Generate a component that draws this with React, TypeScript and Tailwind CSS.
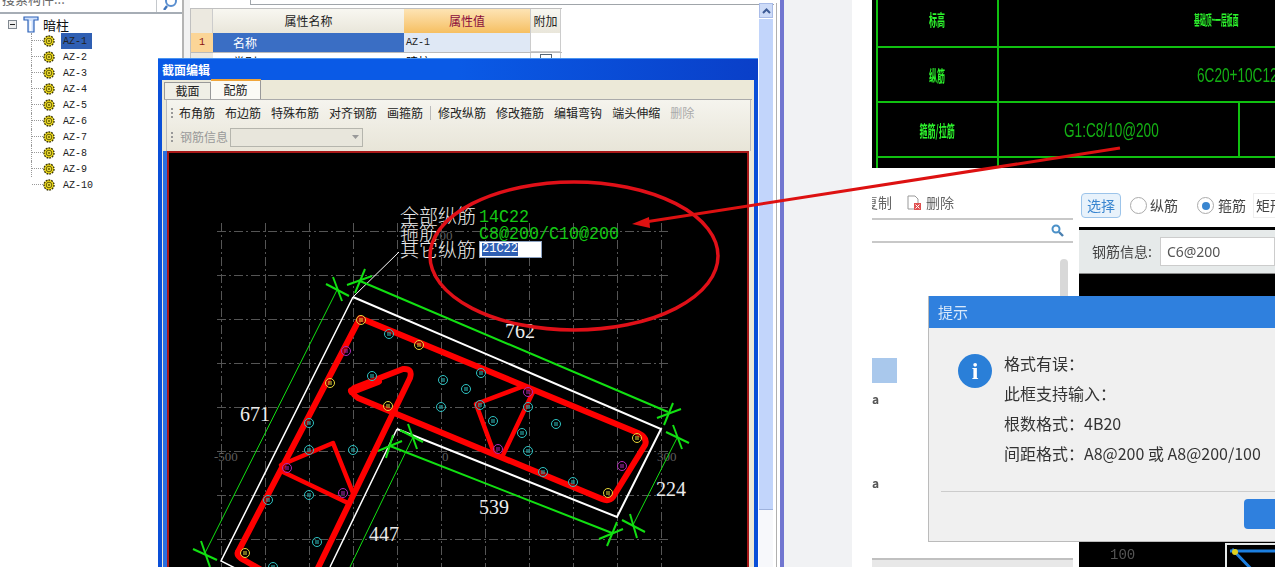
import React from "react";

const Gear = () => (
  <svg width="12" height="12" viewBox="0 0 12 12" className="shrink-0">
    <circle cx="6" cy="6" r="5" fill="#f0dc1a" stroke="#3a3400" strokeWidth="1.4" strokeDasharray="1.8 1" />
    <circle cx="6" cy="6" r="2.8" fill="#fff04a" stroke="#3a3500" strokeWidth="0.8" />
    <rect x="4.8" y="4.8" width="2.4" height="2.4" fill="#8a7d00" />
  </svg>
);

const items = ["AZ-1", "AZ-2", "AZ-3", "AZ-4", "AZ-5", "AZ-6", "AZ-7", "AZ-8", "AZ-9", "AZ-10"];

const Tree = () => (
  <div className="w-[182px] shrink-0 flex flex-col">
    <div className="flex h-[14px] border-b-2 border-[#a6adb5]">
      <div className="w-[157px] border-r border-[#c4c8cc] flex items-end overflow-hidden text-[13px] leading-[15px] text-[#666] pl-[2px] pb-[6px]">
        搜索构件...
      </div>
      <div className="flex-1 flex justify-center items-start overflow-hidden">
        <svg width="16" height="10" viewBox="0 0 16 10">
          <circle cx="9" cy="1" r="5" fill="none" stroke="#5a8fd0" strokeWidth="2" />
          <path d="M5 6 L2 10" stroke="#3f74bb" strokeWidth="2.4" />
        </svg>
      </div>
    </div>
    <div className="flex items-center h-[17px] mt-[2px] pl-[8px]">
      <div className="w-[9px] h-[9px] border border-[#808890] bg-[#eee] flex items-center justify-center">
        <div className="w-[5px] h-px bg-[#222]" />
      </div>
      <svg width="16" height="17" viewBox="0 0 16 17" className="ml-[6px]">
        <path d="M1 1 H15 V4 H11 V16 H5 V4 H1 Z" fill="#cfe0fb" stroke="#2e63b8" strokeWidth="1.2" />
        <rect x="6.5" y="5" width="2" height="10" fill="#fff" />
      </svg>
      <span className="ml-[4px] text-[13px] text-[#111] leading-none">暗柱</span>
    </div>
    <div className="flex flex-col pl-[31px]">
      {items.map((t, i) => (
        <div key={t} className="flex items-center h-[16px]">
          <div className={`w-[12px] h-full border-l border-dotted border-[#999] ${i === items.length - 1 ? "border-transparent" : ""}`}>
            <div className="h-[8px] border-b border-dotted border-[#999]" />
          </div>
          <Gear />
          <span className={`ml-[6px] px-[2px] h-full flex items-center font-['Liberation_Mono',monospace] text-[10px] text-[#222] ${i === 0 ? "bg-[#2f5fb3] min-w-[31px]" : ""}`}>
            {t}
          </span>
        </div>
      ))}
    </div>
  </div>
);

const Props = () => (
  <div className="flex-1 flex flex-col relative min-w-0">
    <div className="h-[5px] ml-[60px] mr-[6px] border-b border-l border-[#a0a5aa]" />
    <div className="mt-[3px] border-t border-l border-[#c0c0c0] flex flex-col w-[372px] text-[12px]">
      <div className="flex h-[24px]">
        <div className="w-[22px] bg-[#ece9e0] border-r border-[#ccc]" />
        <div className="w-[191px] bg-gradient-to-b from-[#f8f7f1] to-[#e9e6da] flex items-center justify-center text-[#222]">属性名称</div>
        <div className="w-[126px] bg-gradient-to-b from-[#fde4b4] to-[#f6bf60] flex items-center justify-center text-[#8a0b3c]">属性值</div>
        <div className="w-[31px] bg-gradient-to-b from-[#f8f7f1] to-[#e9e6da] border-x border-[#ccc] flex items-center justify-center text-[#222]">附加</div>
      </div>
      <div className="flex h-[19px]">
        <div className="w-[22px] bg-[#fbd597] flex items-center justify-center text-[#8a1010] font-['Liberation_Mono',monospace] text-[10px]">1</div>
        <div className="w-[191px] bg-[#3a6ec4] text-white flex items-center pl-[20px]">名称</div>
        <div className="w-[126px] bg-[#dfe8f5] flex items-center pl-[2px] font-['Liberation_Mono',monospace] text-[10px] text-[#222]">AZ-1</div>
        <div className="w-[31px] border-x border-b border-[#ccc]" />
      </div>
      <div className="flex h-[19px] border-t border-[#bbb]">
        <div className="w-[22px] bg-[#ece9e0]" />
        <div className="w-[191px] pl-[20px]">类别</div>
        <div className="w-[126px] pl-[2px]">暗柱</div>
        <div className="w-[31px] border-x border-[#ccc] flex justify-center pt-[1px]">
          <div className="w-[12px] h-[12px] border border-[#567]" />
        </div>
      </div>
    </div>
    <div className="absolute right-[3px] top-[3px] bottom-0 w-[18px] flex flex-col border-r border-[#b0b0b0] pr-[3px]">
      <div className="h-[15px] bg-[#cddbf8] border border-[#a9bce8] flex items-center justify-center">
        <svg width="9" height="6" viewBox="0 0 9 6"><path d="M1 5 L4.5 1.5 L8 5" fill="none" stroke="#3d5b96" strokeWidth="2" /></svg>
      </div>
      <div className="h-[491px] bg-[#c2d5fb] border-b border-[#9eb2dc] mt-[1px]" />
      <div className="flex-1 bg-[#f7f8fb]" />
    </div>
  </div>
);

const tools = ["布角筋", "布边筋", "特殊布筋", "对齐钢筋", "画箍筋"];
const tools2 = ["修改纵筋", "修改箍筋", "编辑弯钩", "端头伸缩"];

const Grip = () => (
  <div className="w-[2px] h-[11px] bg-[repeating-linear-gradient(to_bottom,#999_0,#999_2px,transparent_2px,transparent_4px)]" />
);

const dots: [number, number, string][] = [
  [361, 320, "#e8d83a"], [419, 345, "#e8d83a"], [330, 383, "#e8d83a"], [388, 406, "#e8d83a"], [245, 553, "#e8d83a"], [637, 438, "#e8d83a"], [608, 493, "#e8d83a"],
  [346, 351, "#b02ab8"], [287, 468, "#b02ab8"], [343, 493, "#b02ab8"], [528, 392, "#b02ab8"], [498, 449, "#b02ab8"], [622, 466, "#b02ab8"],
  [389, 334, "#2fc4c4"], [372, 376, "#2fc4c4"], [443, 380, "#2fc4c4"], [309, 423, "#2fc4c4"], [309, 450, "#2fc4c4"], [353, 450, "#2fc4c4"], [441, 407, "#2fc4c4"],
  [268, 500, "#2fc4c4"], [309, 495, "#2fc4c4"], [317, 542, "#2fc4c4"], [273, 567, "#2fc4c4"], [481, 373, "#2fc4c4"], [466, 389, "#2fc4c4"], [480, 405, "#2fc4c4"],
  [528, 407, "#2fc4c4"], [493, 421, "#2fc4c4"], [522, 433, "#2fc4c4"], [556, 424, "#2fc4c4"], [528, 451, "#2fc4c4"], [543, 472, "#2fc4c4"], [573, 482, "#2fc4c4"],
];

const ticks = [
  [326, 284, 349, 296], [333, 277, 342, 301], [347, 285, 372, 276], [365, 269, 355, 293],
  [657, 418, 681, 409], [673, 403, 664, 425], [666, 432, 689, 443], [673, 425, 682, 449],
  [599, 539, 623, 529], [617, 522, 607, 546], [622, 520, 645, 532], [630, 514, 637, 538],
  [378, 451, 402, 441], [393, 435, 386, 458], [400, 430, 423, 442], [408, 424, 417, 449],
  [193, 549, 217, 560], [201, 541, 210, 567],
];

const gridX = [221, 265, 309, 353, 397, 441, 485, 529, 573, 617, 661];
const gridY = [231, 275, 319, 363, 407, 451, 495, 539];

const Drawing = () => (
  <svg width="578" height="414" viewBox="169 153 578 414" className="block">
    <g stroke="#555555" strokeWidth="1" strokeDasharray="9 3 2 3">
      {gridX.map((x) => <line key={x} x1={x + 0.5} y1="223" x2={x + 0.5} y2="567" />)}
      {gridY.map((y) => <line key={y} x1="217" y1={y + 0.5} x2="669" y2={y + 0.5} />)}
    </g>
    <g fontFamily="'Liberation Serif',serif" fontSize="13" fill="#5e5e5e">
      <text x="214" y="461">-500</text>
      <text x="442" y="461">0</text>
      <text x="657" y="461">300</text>
      <text x="433" y="240">200</text>
    </g>
    <g stroke="#fff" fill="none">
      <path d="M353 297 L661 429 L617 517 L397 429" strokeWidth="2" />
      <path d="M397 429 L330 567 M353 297 L221 561 L245 573" strokeWidth="1.5" />
      <path d="M399 252 L353 297" strokeWidth="1" />
    </g>
    <g stroke="#12e012" fill="none">
      <path d="M360 281 L668 412 M390 446 L612 533" strokeWidth="2" />
      <path d="M337 290 L205 553 M413 437 L350 567 M677 438 L633 525" strokeWidth="1" />
      {ticks.map((t, i) => <line key={i} x1={t[0]} y1={t[1]} x2={t[2]} y2={t[3]} strokeWidth="2" />)}
    </g>
    <g stroke="#ff0000" fill="none" strokeLinejoin="round" strokeLinecap="round">
      <path d="M238 552 L360 318 L638 433 Q648 438 645 445 L613 497 Q609 502 602 499 L358 398 Q350 393 354 388 L403 369 Q413 368 410 378 L317 570" strokeWidth="6" />
      <path d="M238 552 Q236 556 244 560 L270 575" strokeWidth="6" />
      <path d="M352 391 L378 381" strokeWidth="8" />
      <path d="M281 465 L333 443 L353 493 M281 471 L348 503" strokeWidth="4.5" />
      <path d="M524 386 L476 404 L494 453 M533 392 L503 455" strokeWidth="4.5" />
    </g>
    {dots.map(([x, y, c], i) => (
      <g key={i} stroke={c} fill="none" strokeWidth="1">
        <circle cx={x} cy={y} r="4.5" fill="#000" fillOpacity="0.35" />
        <path d={`M${x - 2} ${y - 1} H${x + 2} M${x - 2} ${y + 1} H${x + 2}`} />
      </g>
    ))}
    <g fontFamily="'Noto Sans CJK SC',sans-serif" fontSize="19" fill="#ececec" fontWeight="300">
      <text x="400" y="223">全部纵筋</text>
      <text x="400" y="240">箍筋</text>
      <text x="400" y="257">其它纵筋</text>
    </g>
    <g fontFamily="'Liberation Mono',monospace" fontSize="19" fill="#14c814">
      <text x="479" y="222" textLength="50" lengthAdjust="spacingAndGlyphs">14C22</text>
      <text x="479" y="239" textLength="140" lengthAdjust="spacingAndGlyphs">C8@200/C10@200</text>
    </g>
    <g fontFamily="'Liberation Serif',serif" fontSize="20" fill="#ececec">
      <text x="505" y="338">762</text>
      <text x="240" y="421">671</text>
      <text x="369" y="541">447</text>
      <text x="479" y="514">539</text>
      <text x="656" y="496">224</text>
    </g>
  </svg>
);

const SectionWindow = () => (
  <div className="absolute left-[158px] top-[58px] w-[600px] h-[520px] flex flex-col bg-[#0a4fd8] border-t border-[#4a94f0] px-[4px]">
    <div className="h-[21px] shrink-0 -mx-[4px] px-[4px] bg-gradient-to-r from-[#0a5ae6] via-[#0a5ae6] to-[#0a3fc8] flex items-center text-white text-[12px] font-bold">
      截面编辑
    </div>
    <div className="flex-1 bg-[#ece9d8] flex flex-col pl-[3px] pr-[2px]">
      <div className="flex items-end h-[20px] -ml-[1px] shrink-0 border-b border-[#aaa]">
        <div className="w-[47px] h-[17px] bg-[#f0efe6] border border-b-0 border-[#999] flex items-center justify-center text-[12px] text-[#222]">截面</div>
        <div className="w-[50px] h-[20px] bg-[#fbfaf5] border-t-2 border-t-[#f0a53a] border-r border-[#999] flex items-center justify-center text-[12px] text-[#222]">配筋</div>
      </div>
      <div className="mx-[1px] h-[51px] shrink-0 border-x border-[#bbb] bg-gradient-to-b from-[#f5f4ee] to-[#e8e5d8] flex flex-col">
        <div className="flex items-center gap-[10px] h-[26px] pl-[4px] text-[12px] text-[#222] whitespace-nowrap">
          <div className="mr-[-4px]"><Grip /></div>
          {tools.map((t) => <span key={t}>{t}</span>)}
          <div className="w-px h-[14px] bg-[#bbb] -mx-[3px]" />
          {tools2.map((t) => <span key={t}>{t}</span>)}
          <span className="text-[#aaa]">删除</span>
        </div>
        <div className="flex items-center h-[22px] pl-[4px] text-[12px] text-[#999]">
          <Grip />
          <span className="ml-[7px]">钢筋信息</span>
          <div className="ml-[2px] w-[133px] h-[19px] border border-[#b5b5ad] bg-[#e8e6dc] flex items-center justify-end pr-[3px]">
            <svg width="7" height="4" viewBox="0 0 7 4"><path d="M0 0 H7 L3.5 4 Z" fill="#999" /></svg>
          </div>
        </div>
      </div>
      <div className="flex-1 flex min-h-0">
        <div className="w-[4px] -ml-[2px] bg-[#2a6fe0] shrink-0" />
        <div className="w-[582px] shrink-0 border-2 border-[#a81818] bg-black relative overflow-hidden">
          <Drawing />
          <div className="absolute left-[310px] top-[88px] w-[63px] h-[17px] bg-white border border-[#8aa0c0] flex items-center pl-[2px]">
            <span className="bg-[#2f5fb3] text-white font-['Liberation_Mono',monospace] text-[12px] leading-[13px]">21C22</span>
          </div>
        </div>
      </div>
    </div>
  </div>
);

const TopDrawing = () => (
  <div className="h-[168px] bg-black pl-[4px] overflow-hidden text-[#2df52d]">
    <div className="w-[600px] h-full border-l-2 border-[#10c010] flex flex-col">
      <div className="h-[48px] flex border-b-2 border-[#10c010] shrink-0">
        <div className="w-[121px] shrink-0 border-r-2 border-[#10c010] flex items-center justify-center pb-[8px] text-[16px] font-bold"><span className="inline-block scale-x-[0.5]">标高</span></div>
        <div className="flex-1 pl-[195px] pt-[9px] text-[14px] font-bold whitespace-nowrap"><span className="inline-block origin-left scale-x-[0.42]">基础顶~一层板面</span></div>
      </div>
      <div className="h-[55px] flex border-b-2 border-[#10c010] shrink-0">
        <div className="w-[121px] shrink-0 border-r-2 border-[#10c010] flex items-center justify-center text-[16px] font-bold"><span className="inline-block scale-x-[0.5]">纵筋</span></div>
        <div className="flex-1 flex items-center pl-[198px] text-[20px] whitespace-nowrap text-[#14b014] font-['Liberation_Sans',sans-serif]"><span className="inline-block origin-left scale-x-[0.68]">6C20+10C12</span></div>
      </div>
      <div className="h-[55px] flex border-b-2 border-[#10c010] shrink-0">
        <div className="w-[121px] shrink-0 border-r-2 border-[#10c010] flex items-center justify-center text-[16px] font-bold whitespace-nowrap"><span className="inline-block scale-x-[0.5]">箍筋/拉筋</span></div>
        <div className="w-[241px] shrink-0 border-r-2 border-[#10c010] flex items-center pl-[65px] text-[20px] whitespace-nowrap text-[#14b014] font-['Liberation_Sans',sans-serif]"><span className="inline-block origin-left scale-x-[0.68]">G1:C8/10@200</span></div>
      </div>
      <div className="flex-1 flex"><div className="w-[121px] border-r-2 border-[#10c010]" /></div>
    </div>
  </div>
);

const BottomPanel = () => (
  <div className="flex-1 mt-[22px] flex min-h-0 text-[#444] text-[14px]">
    <div className="w-[201px] shrink-0 flex flex-col overflow-hidden">
      <div className="h-[28px] flex items-center gap-[3px] shrink-0 -ml-[8px] pb-[3px]">
        <span className="text-[#666]">复制</span>
        <svg width="18" height="18" viewBox="0 0 18 18" className="ml-[10px]">
          <path d="M3 2 H10 L13 5 V15 H3 Z" fill="#fff" stroke="#999" />
          <rect x="9" y="9" width="7" height="7" fill="#e05050" />
          <path d="M10.5 10.5 L14.5 14.5 M14.5 10.5 L10.5 14.5" stroke="#fff" />
        </svg>
        <span className="text-[#666]">删除</span>
      </div>
      <div className="h-[25px] shrink-0 border-y-2 border-[#c8c8c8] flex items-center justify-end pr-[9px]">
        <svg width="13" height="13" viewBox="0 0 13 13"><circle cx="5" cy="5" r="3.5" fill="none" stroke="#4a90c8" strokeWidth="2" /><path d="M8 8 L12 12" stroke="#4a7fb0" strokeWidth="2.4" /></svg>
      </div>
      <div className="flex-1 relative">
        <div className="absolute right-[5px] top-[16px] w-[8px] h-[90px] rounded bg-[#d8d8d8]" />
        <div className="absolute left-0 top-[115px] w-[25px] h-[25px] bg-[#a9c8ec]" />
        <span className="absolute left-0 top-[147px] text-[12px] font-bold text-[#555]">a</span>
        <span className="absolute left-0 top-[231px] text-[12px] font-bold text-[#555]">a</span>
      </div>
      <div className="h-[9px] shrink-0 border-t-2 border-[#c0c0c0] bg-[#e8e8e8]" />
    </div>
    <div className="flex-1 flex flex-col min-w-0 pl-[8px] overflow-hidden">
      <div className="h-[37px] shrink-0 flex items-start gap-[9px] pt-[3px] whitespace-nowrap">
        <div className="w-[40px] shrink-0 h-[25px] border border-[#9cc4ea] rounded bg-[#e8f2fb] text-[#3a86d0] flex items-center justify-center">选择</div>
        <div className="flex items-center gap-[3px] h-[25px] shrink-0">
          <div className="w-[17px] h-[17px] rounded-full border border-[#aaa] bg-white shrink-0" />
          <span>纵筋</span>
        </div>
        <div className="flex items-center gap-[4px] h-[25px] ml-[10px] shrink-0">
          <div className="w-[17px] h-[17px] rounded-full border border-[#aaa] bg-white flex items-center justify-center shrink-0">
            <div className="w-[8px] h-[8px] rounded-full bg-[#3a86d0]" />
          </div>
          <span>箍筋</span>
        </div>
        <div className="h-[25px] border border-[#eee] flex items-center pl-[2px] -ml-[2px] shrink-0">矩形</div>
      </div>
      <div className="flex-1 -ml-[2px] bg-black pt-[3px] flex flex-col">
        <div className="h-[44px] shrink-0 bg-[#e6eaea] flex items-center pl-[13px] gap-[8px] border-b border-[#888]">
          <span className="whitespace-nowrap">钢筋信息:</span>
          <div className="flex-1 h-[29px] bg-white border border-[#ccc] flex items-center pl-[6px] font-['Noto_Sans',sans-serif] text-[#555]">C6@200</div>
        </div>
        <div className="flex-1 flex items-end">
          <div className="w-[145px] h-[24px] relative text-[#555] font-['Liberation_Mono',monospace] text-[14px]">
            <span className="absolute left-[31px] top-[2px]">100</span>
          </div>
          <div className="flex-1 h-[24px] ml-[1px] bg-black border-l-2 border-t-2 border-[#e6eaea] overflow-hidden">
            <svg width="60" height="24" viewBox="0 0 60 24"><path d="M3 6 H60 M5 4 L30 30" stroke="#1c7fe0" strokeWidth="3" fill="none" /><circle cx="8" cy="7" r="3" fill="#e0d020" /></svg>
          </div>
        </div>
      </div>
    </div>
  </div>
);

const Dialog = () => (
  <div className="absolute left-[928px] top-[296px] w-[400px] h-[246px] bg-[#f0f0f0] border-b border-l border-[#bbb] blur-[0.4px] flex flex-col">
    <div className="h-[32px] shrink-0 bg-[#2f80de] text-[#d8e8fa] text-[15px] flex items-center pl-[9px]">提示</div>
    <div className="flex-1 flex pl-[29px] pt-[22px] min-h-0">
      <div className="w-[34px] h-[34px] rounded-full bg-[#2a7fd8] flex items-center justify-center text-white font-bold text-[24px] font-['Liberation_Serif',serif] mt-[4px] shrink-0">i</div>
      <div className="ml-[12px] flex flex-col text-[16px] text-[#333] leading-[30px] whitespace-nowrap font-['Noto_Sans_CJK_SC',sans-serif] -mt-[2px]">
        <span>格式有误：</span>
        <span>此框支持输入：</span>
        <span>根数格式：4B20</span>
        <span>间距格式：A8@200 或 A8@200/100</span>
      </div>
    </div>
    <div className="h-[50px] shrink-0 ml-[12px] border-t border-[#ccc] pt-[7px] pl-[303px]">
      <div className="h-[30px] w-[80px] rounded bg-[#2f80de]" />
    </div>
  </div>
);

const Annotations = () => (
  <svg width="1275" height="567" viewBox="0 0 1275 567" className="absolute inset-0 pointer-events-none">
    <ellipse cx="574" cy="256" rx="144" ry="74" fill="none" stroke="#e01018" strokeWidth="3.5" />
    <path d="M1120 148 L645 222" stroke="#dd1111" strokeWidth="3" fill="none" />
    <path d="M632 224 L649 217 L650 228 Z" fill="#dd1111" />
  </svg>
);

export default function App() {
  return (
    <div className="relative w-[1275px] h-[567px] overflow-hidden bg-white flex font-['Noto_Sans_CJK_SC','Liberation_Sans',sans-serif]">
      <div className="w-[784px] shrink-0 flex bg-white border-r-4 border-[#7176d0] relative">
        <Tree />
        <div className="w-[8px] shrink-0 bg-[#f2f2f2] border-l-2 border-[#b4b4b4]" />
        <Props />
      </div>
      <div className="w-[68px] shrink-0 bg-[#f1f2f4]" />
      <div className="w-[20px] shrink-0" />
      <div className="flex-1 min-w-0 flex flex-col blur-[0.3px]">
        <TopDrawing />
        <BottomPanel />
      </div>
      <SectionWindow />
      <Dialog />
      <Annotations />
    </div>
  );
}
